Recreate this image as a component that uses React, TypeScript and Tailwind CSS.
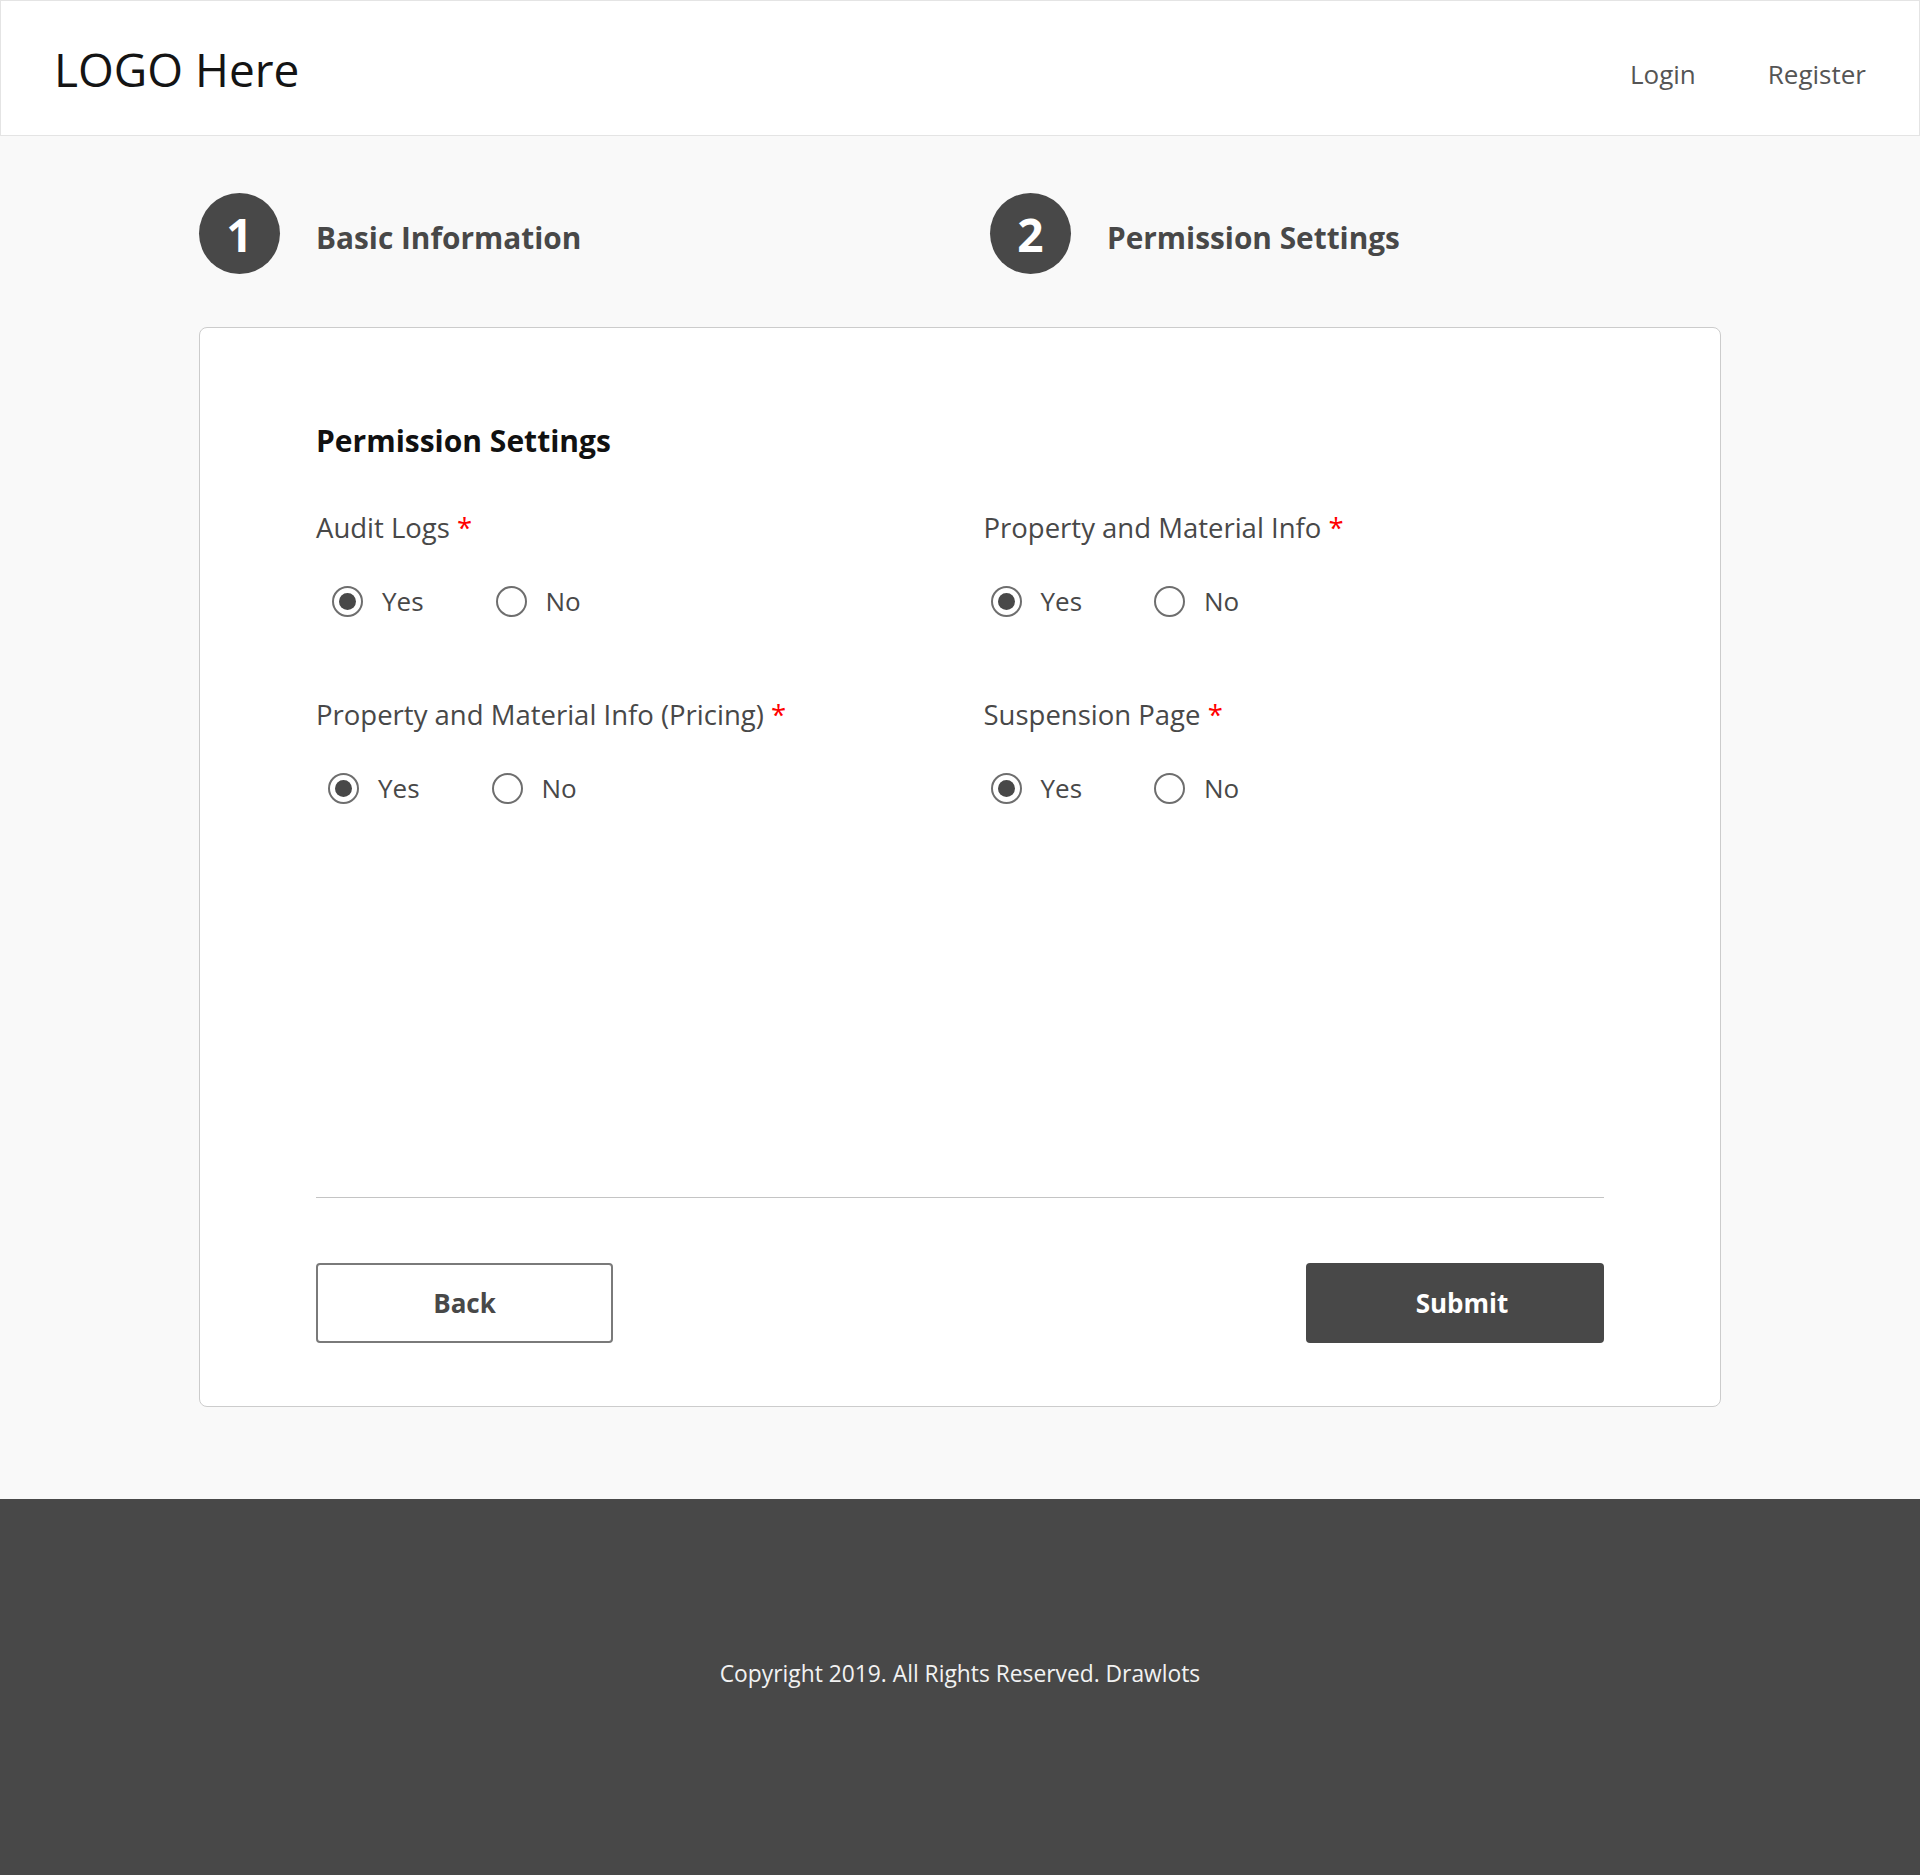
import React, { useState } from "react";

type Choice = "yes" | "no";

interface FieldProps {
  label: string;
  value: Choice;
  onChange: (v: Choice) => void;
  offset: string;
}

function Radio({ checked, label, onClick }: { checked: boolean; label: string; onClick: () => void }) {
  return (
    <button type="button" onClick={onClick} className="flex items-center gap-[19px] h-[32px]">
      <span className="flex items-center justify-center w-[31px] h-[31px] rounded-full border-2 border-[#6e6e6e] bg-white">
        {checked && <span className="w-[17px] h-[17px] rounded-full bg-[#484848]" />}
      </span>
      <span className="text-[26px] leading-[32px] text-[#484848]">{label}</span>
    </button>
  );
}

function Field({ label, value, onChange, offset }: FieldProps) {
  return (
    <div>
      <div className="text-[27.5px] leading-[36px] text-[#484848]">
        {label} <span className="text-[#ff0000]">*</span>
      </div>
      <div className={`flex items-center gap-[72px] mt-[39px] ${offset}`}>
        <Radio checked={value === "yes"} label="Yes" onClick={() => onChange("yes")} />
        <Radio checked={value === "no"} label="No" onClick={() => onChange("no")} />
      </div>
    </div>
  );
}

export default function App() {
  const [audit, setAudit] = useState<Choice>("yes");
  const [material, setMaterial] = useState<Choice>("yes");
  const [pricing, setPricing] = useState<Choice>("yes");
  const [suspension, setSuspension] = useState<Choice>("yes");

  return (
    <div className="min-h-screen bg-[#f9f9f9] font-['Open_Sans','Noto_Sans',sans-serif]">
      {/* Header */}
      <header className="h-[136px] bg-white border border-[#e4e4e4] flex items-center justify-between pl-[53px] pr-[53px]">
        <div className="text-[46px] leading-none text-[#141414] mt-[2px]">LOGO Here</div>
        <nav className="flex items-center gap-[72px] text-[26px] text-[#555555] mt-[12px]">
          <a href="#">Login</a>
          <a href="#">Register</a>
        </nav>
      </header>

      <main className="w-[1522px] mx-auto pt-[57px] pb-[92px]">
        {/* Steps */}
        <div className="grid grid-cols-2 gap-x-[60px]">
          <div className="flex items-center gap-[36px]">
            <div className="w-[81px] h-[81px] rounded-full bg-[#484848] flex items-center justify-center text-white text-[46px] font-bold leading-none">
              1
            </div>
            <div className="text-[29.8px] font-bold text-[#484848] mt-[10px]">Basic Information</div>
          </div>
          <div className="flex items-center gap-[36px]">
            <div className="w-[81px] h-[81px] rounded-full bg-[#484848] flex items-center justify-center text-white text-[46px] font-bold leading-none">
              2
            </div>
            <div className="text-[29.8px] font-bold text-[#484848] mt-[10px]">Permission Settings</div>
          </div>
        </div>

        {/* Card */}
        <section className="mt-[53px] h-[1080px] bg-white border border-[#cccccc] rounded-[8px] px-[116px] pt-[93px] flex flex-col">
          <h2 className="text-[30px] leading-[40px] font-bold text-[#111111]">Permission Settings</h2>

          <div className="grid grid-cols-2 gap-x-[47px] gap-y-[80px] mt-[49px]">
            <Field label="Audit Logs" value={audit} onChange={setAudit} offset="pl-[16px]" />
            <Field label="Property and Material Info" value={material} onChange={setMaterial} offset="pl-[7px]" />
            <Field label="Property and Material Info (Pricing)" value={pricing} onChange={setPricing} offset="pl-[12px]" />
            <Field label="Suspension Page" value={suspension} onChange={setSuspension} offset="pl-[7px]" />
          </div>

          <div className="mt-auto border-t border-[#c4c4c4]" />

          <div className="flex justify-between mt-[65px] mb-[63px]">
            <button type="button" className="w-[297px] h-[80px] border-2 border-[#7a7a7a] rounded-[4px] text-[26px] font-bold text-[#484848]">
              Back
            </button>
            <button type="button" className="w-[298px] h-[80px] bg-[#484848] rounded-[4px] pl-[14px] text-[26px] font-bold text-white">
              Submit
            </button>
          </div>
        </section>
      </main>

      {/* Footer */}
      <footer className="h-[376px] bg-[#484848] flex justify-center pt-[160px]">
        <p className="text-[22.8px] leading-[30px] text-[#f2f2f2]">Copyright 2019. All Rights Reserved. Drawlots</p>
      </footer>
    </div>
  );
}
